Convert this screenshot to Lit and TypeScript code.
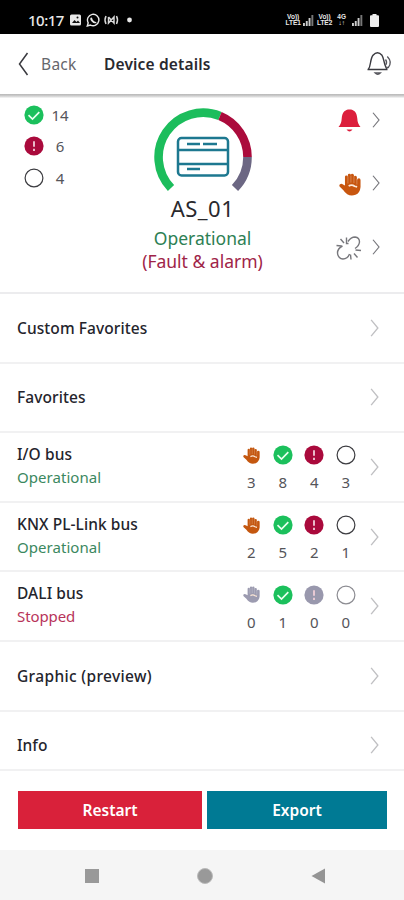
import { LitElement, html, css, svg } from "lit";
import { customElement, property } from "lit/decorators.js";
import { classMap } from "lit/directives/class-map.js";

const check = html`<svg class="ic" width="20" height="20" viewBox="0 0 20 20"><circle cx="10" cy="10" r="9.6" fill="#1bc05c"/><path d="M4.500 10.200l4 3.800 6.800-6.800" fill="none" stroke="#e9fff0" stroke-width="1.700"/></svg>`;
const fault = (color: string) => html`<svg class="ic" width="20" height="20" viewBox="0 0 20 20"><circle cx="10" cy="10" r="9.6" fill=${color}/><path d="M10 5.200v5.600M10 12.700v2.200" stroke="#f0cfd9" stroke-width="1.800"/></svg>`;
const ring = (color: string) => html`<svg class="ic" width="20" height="20" viewBox="0 0 20 20"><circle cx="10" cy="10" r="8.900" fill="none" stroke=${color} stroke-width="1.200"/></svg>`;
const hand = (color: string, w: number, h: number) => html`<svg class="ic" width=${w} height=${h} viewBox="0 0 24 24" preserveAspectRatio="none"><path fill=${color} d="M6.500 13V4Q6.500 2.500 8 2.500T9.700 4V2.200Q9.700.8 11.300.8T13 2.200Q13 .8 14.600.8T16.300 2.400V4Q16.300 2.800 17.900 2.800T19.500 4.400V7.500Q20 5.400 21.700 5.400T23.500 7.200V14.500Q23 20.500 18 22.800 13 24.400 9 22.200 6.500 20.500 4.800 18L.9 14.400Q-.3 12.600 1.200 11.700T4.400 12z"/><path d="M9.700 3.500v7.500M13 2.600v7.500M16.300 3.500v7M19.500 6.500v5.500" stroke="#fff" stroke-opacity=".36" stroke-width=".8"/><path d="M10.500 13.600q3.500-2 6.500.2l2.800.7" fill="none" stroke="#fbe6d6" stroke-width="1.800"/></svg>`;
const chevron = (w: number, h: number, color: string) => html`<svg class="ic" width=${w} height=${h} viewBox="0 0 8 17" preserveAspectRatio="none"><path d="M1 .8l6 7.700-6 7.700" fill="none" stroke=${color} stroke-width="1.200"/></svg>`;

interface Bus { name: string; status: string; stopped?: boolean; counts: number[]; }

@customElement("menu-row")
class MenuRow extends LitElement {
  @property() label = "";
  @property({ attribute: false }) bus?: Bus;
  static styles = css`
    :host { display: flex; box-sizing: border-box; height: 69.600px; align-items: center; padding: 0 25px 0 17px; border-bottom: 2px solid #f1f1f2; background: #fff; }
    :host(.last) { height: 59px; padding-top: 10px; }
    .ic { display: block; }
    .text { flex: 1; white-space: nowrap; padding-top: 1px; }
    .pair { padding: 0 0 2px; }
    .name { font: 500 15.500px/23px "Noto Sans", sans-serif; letter-spacing: .08px; color: #24242c; }
    .spaced { letter-spacing: .35px; }
    .status { font: 400 15px/23px "Noto Sans", sans-serif; letter-spacing: .05px; color: #3b8860; }
    .stopped { color: #b8345a; letter-spacing: -.1px; }
    .counts { display: grid; grid-template-columns: repeat(4, 31.500px); margin-right: 8.500px; padding-top: 4px; }
    .count { display: flex; flex-direction: column; align-items: center; font: 400 15px/20px "Noto Sans", sans-serif; color: #55555a; }
    .count span { margin-top: 7px; }
    .glyph { height: 20px; display: flex; align-items: center; }
  `;
  render() {
    const b = this.bus;
    const off = !!b?.stopped;
    const icons = [hand(off ? "#9c9bb0" : "#c4570f", 17, 17), check, fault(off ? "#9998ad" : "#aa0a3c"), ring(off ? "#8c8c92" : "#3c3c40")];
    return html`
      <div class=${classMap({ text: true, pair: !!b })}>
        <div class=${classMap({ name: true, spaced: this.label.startsWith("Graphic") })}>${b ? b.name : this.label}</div>
        ${b ? html`<div class=${classMap({ status: true, stopped: off })}>${b.status}</div>` : ""}
      </div>
      ${b ? html`<div class="counts">${b.counts.map((n, i) => html`<div class="count"><div class="glyph">${icons[i]}</div><span>${n}</span></div>`)}</div>` : ""}
      ${chevron(9, 18, "#c0c0c3")}`;
  }
}

@customElement("app-root")
class AppRoot extends LitElement {
  static styles = css`
    :host { display: flex; flex-direction: column; height: 900px; overflow: hidden; background: #fff; font-family: "Noto Sans", sans-serif; }
    .ic { display: block; }
    .statusbar { height: 34px; box-sizing: border-box; background: #000; color: #e8e8e8; display: flex; align-items: center; padding: 6px 25px 0 28px; font: 500 15px/20px "Noto Sans", sans-serif; flex: none; }
    .time { width: 42px; letter-spacing: -.5px; }
    .grow { flex: 1; }
    .volte { font: 700 6.500px/6.500px "Liberation Sans", sans-serif; text-align: center; }
    .net { margin: 0 4px 0 5px; }
    .signal { margin: 0 3px 0 2px; }
    .battery { margin-left: 4px; }
    .header { height: 60px; flex: none; display: flex; align-items: center; padding: 0 10px 0 18px; }
    .back { margin-left: 12px; width: 63px; font-size: 15.500px; letter-spacing: .3px; color: #66666c; }
    .title { font-size: 15.500px; font-weight: 600; letter-spacing: .15px; color: #29292f; flex: 1; }
    .shade { height: 4px; flex: none; background: linear-gradient(#b8b8b8, #cfcfcf 50%, #f8f8f8); }
    .overview { height: 196px; box-sizing: border-box; flex: none; display: grid; grid-template-columns: 100px 205px 1fr; border-bottom: 2px solid #ececee; }
    .tally { padding: 1px 0 0 24px; }
    .tally div { display: flex; align-items: center; gap: 6px; height: 31.500px; }
    .tally .ic { flex: none; }
    .tally span { width: 20px; text-align: center; font-size: 15px; line-height: 24px; color: #55555a; }
    .device { display: flex; flex-direction: column; align-items: center; padding-top: 10px; }
    .id { font-size: 22px; line-height: 26px; letter-spacing: .5px; color: #29292d; margin-top: 1px; }
    .ok { font-size: 17.500px; line-height: 23px; color: #2d8054; margin-top: 6px; }
    .bad { font-size: 17.500px; line-height: 22px; color: #9f2448; white-space: nowrap; }
    .links { padding: 0 24px 0 31px; margin-top: -9.500px; }
    .links div { display: flex; align-items: center; justify-content: space-between; height: 63px; }
    .links .palm { padding-left: 3px; }
    .links .palm .ic:first-child { margin-top: 3px; }
    .links .unlink { padding-top: 1px; margin-left: -1px; }
    .bottom { flex: none; display: flex; gap: 5px; padding: 20px 17px 21px 18px; }
    .btn { border: 0; padding: 0; height: 38px; color: #fff; font: 600 15.500px/38px "Noto Sans", sans-serif; }
    .restart { width: 184px; background: #d9213a; }
    .export { flex: 1; background: #007a94; }
    .nav { flex: 1; background: #f5f5f5; }
    .nav svg { display: block; }
  `;

  buses: Bus[] = [
    { name: "I/O bus", status: "Operational", counts: [3, 8, 4, 3] },
    { name: "KNX PL-Link bus", status: "Operational", counts: [2, 5, 2, 1] },
    { name: "DALI bus", status: "Stopped", stopped: true, counts: [0, 1, 0, 0] },
  ];

  signal() {
    return html`<svg class="signal" width="11" height="11" viewBox="0 0 11 11">${[3, 5, 8, 11].map((h, i) => svg`<rect x=${i * 2.8} y=${11 - h} width="1.900" height=${h} fill=${i === 3 ? "#777" : "#ccc"}/>`)}</svg>`;
  }

  render() {
    return html`
      <div class="statusbar">
        <span class="time">10:17</span>
        <svg width="64" height="14" viewBox="0 0 64 14">
          <rect x="0" y="1.500" width="11" height="11" rx="1.500" fill="#e8e8e8"/><path d="M2 10l2.500-3 2 2 1.500-1.500L10 10z" fill="#111"/><circle cx="7.500" cy="4.500" r="1" fill="#111"/>
          <path d="M17.300 13l.9-3.200A5.700 5.700 0 1 1 20.400 12z" fill="none" stroke="#e8e8e8" stroke-width="1.400"/><path d="M20.700 4.800q1.500-1 1.700 1.200 0 1 2.500 2.800 2 .1 1.500 1-2 1.500-4.500-1t-1.200-4z" fill="#e8e8e8"/>
          <path d="M36 3q-2 4 0 8M38.500 4v6l5.500-6v6L38.500 4M46.500 3q2 4 0 8" fill="none" stroke="#d8d8d8" stroke-width="1.500"/>
          <circle cx="59.500" cy="7" r="2.400" fill="#e8e8e8"/>
        </svg>
        <span class="grow"></span>
        <span class="volte">Vo))<br>LTE1</span>${this.signal()}
        <span class="volte">Vo))<br>LTE2</span>
        <span class="volte net">4G<br>↓↑</span>${this.signal()}
        <svg class="battery" width="9" height="13" viewBox="0 0 9 13"><path d="M2.500 0h4v1.200H8q1 0 1 1V12q0 1-1 1H1q-1 0-1-1V2.200q0-1 1-1h1.500z" fill="#eee"/></svg>
      </div>
      <div class="header">
        <svg width="11" height="24" viewBox="0 0 11 24"><path d="M9.500 1L1.500 12l8 11" fill="none" stroke="#39393e" stroke-width="1.500"/></svg>
        <span class="back">Back</span>
        <span class="title">Device details</span>
        <svg width="28" height="26" viewBox="0 0 28 26"><path d="M1.500 18.500h20M2.500 18C5 15 4 8 7 4.300q4.500-5 9 0c2.200 3 1.700 9.700 5 13.700" fill="none" stroke="#39393f" stroke-width="1.400"/><path d="M9 21.800h5.500q-2.700 3-5.500 0zM19.500 8.500q2 2.500.3 5.500M21.300 5.500q5.300 5.500 1 11h-2.500" fill="none" stroke="#55555c" stroke-width="1.300"/></svg>
      </div>
      <div class="shade"></div>
      <div class="overview">
        <div class="tally">
          <div>${check}<span>14</span></div>
          <div>${fault("#aa0a3c")}<span>6</span></div>
          <div>${ring("#3c3c40")}<span>4</span></div>
        </div>
        <div class="device">
          <svg width="98" height="86" viewBox="-49 -49 98 86">
            <g fill="none" stroke-width="8.600">
              <path d="M-32 31A44.500 44.500 0 0 1 17 -41" stroke="#1cbd5c"/>
              <path d="M17 -41A44.500 44.500 0 0 1 44.500 0" stroke="#ab0b3c"/>
              <path d="M44.500 0A44.500 44.500 0 0 1 32 31" stroke="#6c6783"/>
            </g>
            <g fill="none" stroke="#1d7890" stroke-width="2.500">
              <rect x="-25" y="-19" width="50" height="37.500" rx="3.500"/>
              <path d="M-25-7H25M-25 7H25M-16-13H-3M0-13H14M-16 12H-3"/>
            </g>
          </svg>
          <div class="id">AS_01</div>
          <div class="ok">Operational</div>
          <div class="bad">(Fault &amp; alarm)</div>
        </div>
        <div class="links">
          <div><svg width="26" height="26" viewBox="0 0 26 26"><path d="M2.500 20q3-3 3.200-8.500C6.300 5 9 2.500 13.500 2.500s7.200 2.500 7.800 9Q21.500 17 24.500 20z" fill="#dc1e3c"/><path d="M10.500 22.500q3 4 6 0z" fill="#dc1e3c"/></svg>${chevron(8, 16, "#77777c")}</div>
          <div class="palm">${hand("#c8560f", 22, 23)}${chevron(8, 16, "#77777c")}</div>
          <div class="unlink"><svg width="27" height="27" viewBox="0 0 27 27"><path d="M11.500 3.500v6h2M13 7.500Q16 3 20 3q4.500.5 4.500 5-.5 4-4.500 6.500M7.500 12Q2.500 14.500 2.500 19 3 24.500 8 25q4.500 0 6.500-5M5.500 5l3.500 4M1.500 11.500l5 .5M20.500 16l5.500.5M15.500 20.500l.5 5M19 19.500l3.500 4" fill="none" stroke="#77777c" stroke-width="1.400"/></svg>${chevron(8, 16, "#77777c")}</div>
        </div>
      </div>
      <menu-row label="Custom Favorites"></menu-row>
      <menu-row label="Favorites"></menu-row>
      ${this.buses.map((b) => html`<menu-row .bus=${b}></menu-row>`)}
      <menu-row label="Graphic (preview)"></menu-row>
      <menu-row class="last" label="Info"></menu-row>
      <div class="bottom"><button class="btn restart">Restart</button><button class="btn export">Export</button></div>
      <div class="nav"><svg width="404" height="50" viewBox="0 0 404 50"><rect x="85" y="19" width="14" height="14" fill="#999"/><circle cx="205" cy="26" r="7.500" fill="#999" stroke="#bbb"/><path d="M311.500 26L325 18.500v15z" fill="#949494"/></svg></div>
    `;
  }
}
